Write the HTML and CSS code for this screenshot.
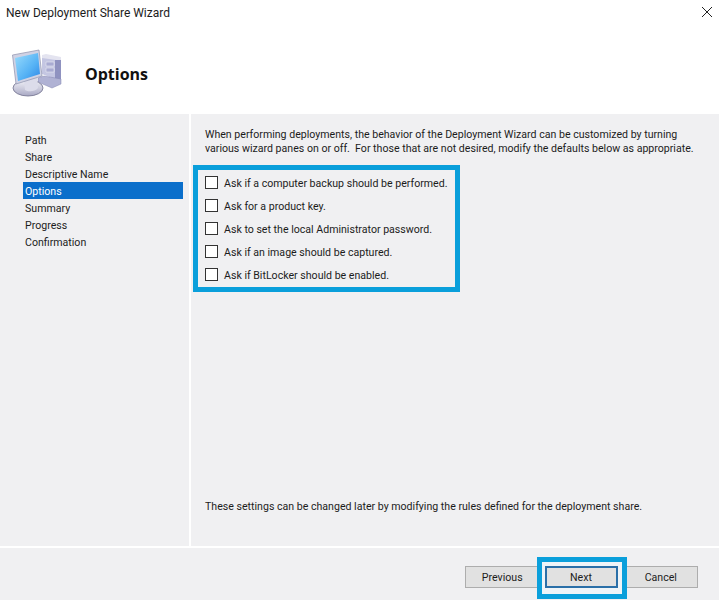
FILE: index.html
```html
<!DOCTYPE html>
<html lang="en">
<head>
    <meta charset="UTF-8">
    <meta name="viewport" content="width=device-width, initial-scale=1.0">
    <title>New Deployment Share Wizard</title>
    <link rel="stylesheet" href="styles.css">
</head>
<body>

    <!-- Top of the window -->
    <header class="top">
        <div class="titlebar">
            <span class="title">New Deployment Share Wizard</span>
            <svg class="close" viewBox="0 0 10 10" width="10" height="10">
                <path d="M0 0L10 10M10 0L0 10" stroke="#222" stroke-width="1" fill="none"/>
            </svg>
        </div>
        <div class="heading">
            <svg class="computer" viewBox="10 48 54 52" width="54" height="52">
                <defs>
                    <linearGradient id="screen" x1="0" y1="0" x2="1" y2="1">
                        <stop offset="0" stop-color="#9adcfc"/>
                        <stop offset="0.6" stop-color="#55b2f5"/>
                        <stop offset="1" stop-color="#2f86e6"/>
                    </linearGradient>
                    <linearGradient id="stand" x1="0" y1="0" x2="0" y2="1">
                        <stop offset="0" stop-color="#f2f2f8"/>
                        <stop offset="1" stop-color="#a9a9c4"/>
                    </linearGradient>
                </defs>
                <!-- torre -->
                <path d="M42 56L56 58L61 61V78L52 78L42 74Z" fill="#c4c6e2"/>
                <path d="M42 55L46 54L61 57V61L56 60L42 58Z" fill="#e4e4f0"/>
                <path d="M55 60L61 60V80L55 82Z" fill="#8f92c0"/>
                <path d="M46 62H54V66H46ZM46 68H54V72H46Z" fill="#a9abd2" stroke="#eaeaf4" stroke-width="0.6"/>
                <!-- base da torre -->
                <path d="M38 78L44 76L61 79V84L52 88L38 82Z" fill="#b0b2d4" stroke="#8385b0" stroke-width="0.5"/>
                <!-- base -->
                <ellipse cx="28" cy="88" rx="15" ry="8" fill="url(#stand)" stroke="#6f6f8c" stroke-width="0.8"/>
                <path d="M24 80L37 77L38 88C35 92 28 92 25 90Z" fill="#dcdcea"/>
                <!-- monitor -->
                <path d="M12.5 55L39 50L42 76L16 84Z" fill="#d0d2e4" stroke="#8d90ac" stroke-width="0.7"/>
                <path d="M15 58L38 53L40 74L18 81Z" fill="url(#screen)"/>
            </svg>
            <h1>Options</h1>
        </div>
    </header>

    <div class="middle">
        <!-- Lista de passos -->
        <nav class="steps">
            <div class="step">Path</div>
            <div class="step">Share</div>
            <div class="step">Descriptive Name</div>
            <div class="step selected">Options</div>
            <div class="step">Summary</div>
            <div class="step">Progress</div>
            <div class="step">Confirmation</div>
        </nav>

        <main class="pane">
            <p class="intro">When performing deployments, the behavior of the Deployment Wizard can be customized by turning<br>various wizard panes on or off.&nbsp; For those that are not desired, modify the defaults below as appropriate.</p>

            <div class="options">
                <label class="option"><input type="checkbox"><span>Ask if a computer backup should be performed.</span></label>
                <label class="option"><input type="checkbox"><span>Ask for a product key.</span></label>
                <label class="option"><input type="checkbox"><span>Ask to set the local Administrator password.</span></label>
                <label class="option"><input type="checkbox"><span>Ask if an image should be captured.</span></label>
                <label class="option"><input type="checkbox"><span>Ask if BitLocker should be enabled.</span></label>
            </div>

            <p class="note">These settings can be changed later by modifying the rules defined for the deployment share.</p>
        </main>
    </div>

    <!-- Botoes -->
    <footer class="buttons">
        <button class="btn">Previous</button>
        <div class="next-frame">
            <button class="btn next">Next</button>
        </div>
        <button class="btn">Cancel</button>
    </footer>

</body>
</html>
```

FILE: styles.css
```css
body {
    margin: 0;
    width: 719px;
    height: 600px;
    overflow: hidden;
    display: flex;
    flex-direction: column;
    background-color: #f0f0f2;
    color: #1c1c1c;
    font-family: Roboto, "Liberation Sans", sans-serif;
    font-size: 10.6px;
    white-space: nowrap;
}

/* Top of the window */
.top {
    height: 114px;
    background-color: #ffffff;
}

.titlebar {
    display: flex;
    justify-content: space-between;
    align-items: flex-start;
    height: 48px;
    padding: 6px 7px 0 6px;
    box-sizing: border-box;
}

.title {
    font-size: 12px;
    line-height: 14px;
}

.close {
    margin-top: 1px;
}

.heading {
    display: flex;
    align-items: flex-start;
    padding-left: 10px;
}

.computer {
    display: block;
}

h1 {
    margin: 15px 0 0 21px;
    font-family: "Open Sans", "Liberation Sans", sans-serif;
    font-size: 16px;
    line-height: 22px;
    font-weight: 700;
    color: #111;
}

/* Middle part */
.middle {
    flex: 1;
    display: flex;
    border-bottom: 2px solid #ffffff;
}

.steps {
    flex-shrink: 0;
    width: 160px;
    padding: 17px 6px 0 23px;
    border-right: 2px solid #ffffff;
}

.step {
    height: 17px;
    line-height: 19px;
    padding-left: 2px;
}

.step.selected {
    background-color: #0b6fcb;
    color: #ffffff;
}

.pane {
    flex: 1;
    display: flex;
    flex-direction: column;
    padding: 14px 0 32px 2px;
}

.intro {
    margin: 0 0 0 12px;
    line-height: 14px;
}

.options {
    width: 257px;
    height: 117px;
    margin-top: 9px;
    border: 5px solid #0a9fdb;
}

.option {
    display: flex;
    align-items: center;
    height: 23px;
    padding-left: 7px;
}

.option:first-child {
    margin-top: 1px;
}

.option span {
    padding-top: 2px;
}

.option input {
    appearance: none;
    flex-shrink: 0;
    width: 13px;
    height: 13px;
    margin: 0 6px 0 0;
    border: 1px solid #333;
    background-color: #ffffff;
    box-sizing: border-box;
}

.note {
    margin: auto 0 0 12px;
    line-height: 14px;
}

/* Botoes */
.buttons {
    height: 52px;
    flex-shrink: 0;
    box-sizing: border-box;
    display: flex;
    align-items: flex-start;
    gap: 5px;
    padding: 18px 21px 0 465px;
}

.btn {
    width: 75px;
    height: 22px;
    padding: 0;
    border: 1px solid #adadad;
    background-color: #e1e1e1;
    color: #1c1c1c;
    font-family: inherit;
    font-size: 10.6px;
}

.next-frame {
    display: flex;
    position: relative;
    margin: -9px -8px 0;
    padding: 4px 4px 6px 3px;
    border: 5px solid #0a9fdb;
    background-color: #eef4f8;
}

.btn.next {
    width: 73px;
    border: 2px solid #2a6fa8;
}
```
